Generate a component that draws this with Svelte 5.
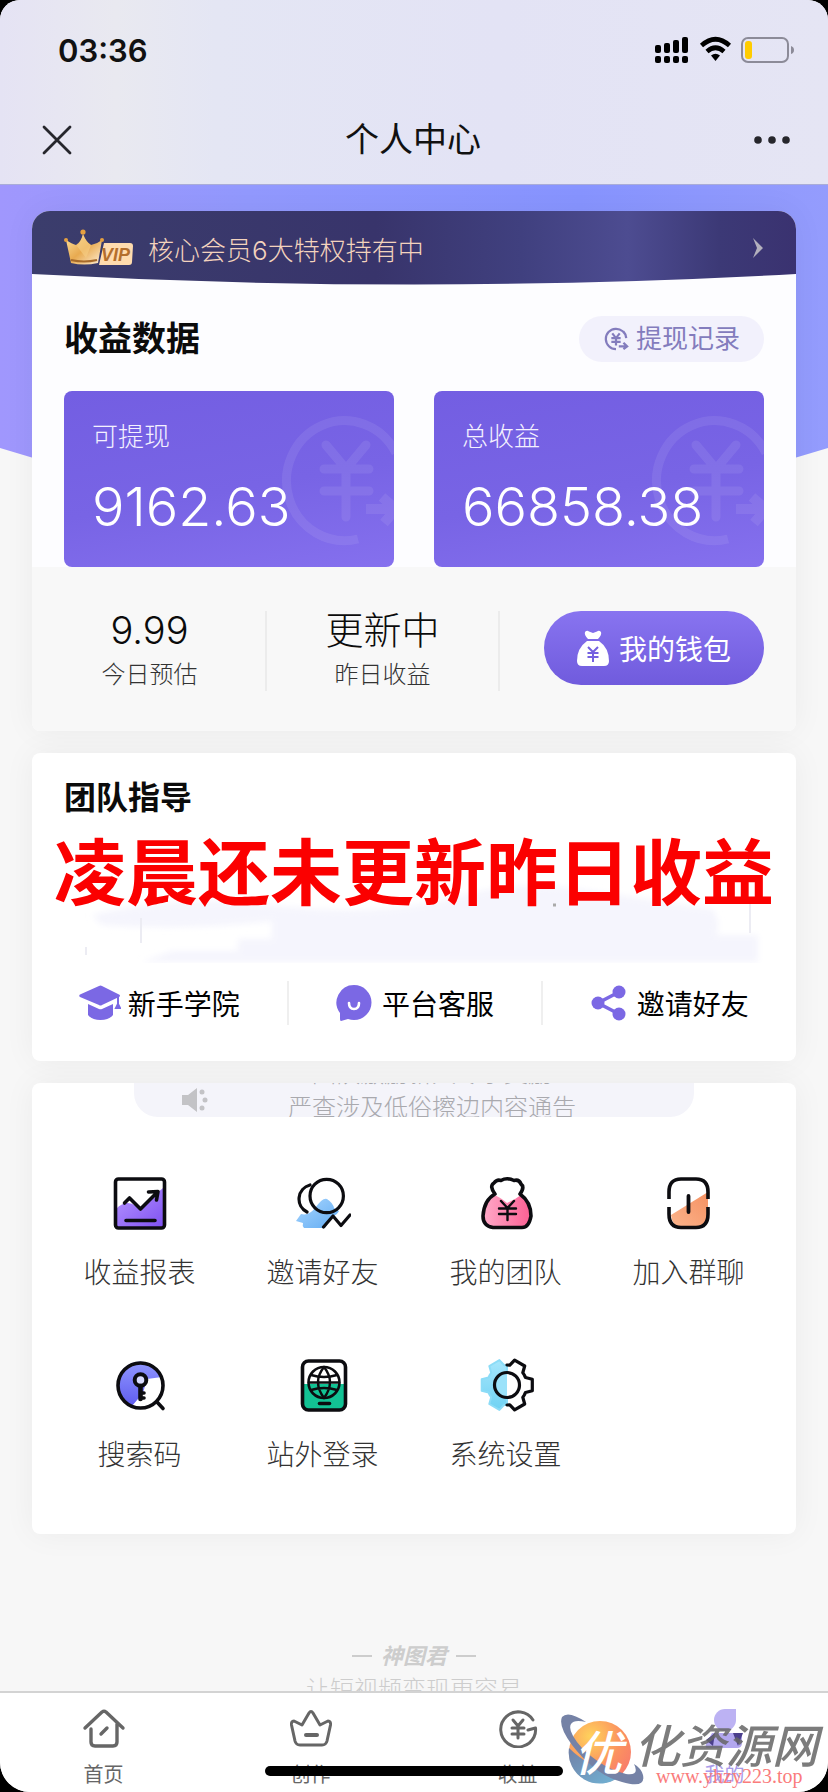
<script>
	const stats = [
		{ label: '可提现', value: '9162.63' },
		{ label: '总收益', value: '66858.38' }
	];

	const links = [
		{ icon: 'school', label: '新手学院' },
		{ icon: 'service', label: '平台客服' },
		{ icon: 'share', label: '邀请好友' }
	];

	const menu = [
		{ icon: 'report', label: '收益报表' },
		{ icon: 'invite', label: '邀请好友' },
		{ icon: 'team', label: '我的团队' },
		{ icon: 'group', label: '加入群聊' },
		{ icon: 'code', label: '搜索码' },
		{ icon: 'login', label: '站外登录' },
		{ icon: 'setting', label: '系统设置' }
	];

	const tabs = [
		{ icon: 'home', label: '首页' },
		{ icon: 'create', label: '创作' },
		{ icon: 'income', label: '收益' },
		{ icon: 'mine', label: '我的', active: true }
	];

	// half of a six-tooth gear, going clockwise from the start angle
	function gear(start) {
		const steps = [[0, 20], [8, 20], [17, 26], [43, 26], [52, 20], [60, 20]];
		let points = [];
		for (let tooth = 0; tooth < 3; tooth++) {
			for (const [deg, r] of steps) {
				const a = ((start + tooth * 60 + deg) * Math.PI) / 180;
				points.push((29 + r * Math.cos(a)).toFixed(1) + ',' + (28 + r * Math.sin(a)).toFixed(1));
			}
		}
		return points.join(' ');
	}
</script>

<div class="app">
	<header>
		<div class="status">
			<span class="time">03:36</span>
			<svg width="140" height="28" viewBox="0 0 140 28" aria-hidden="true">
				<rect x="0" y="9" width="6" height="8" rx="2" /><rect x="9" y="7" width="6" height="10" rx="2" />
				<rect x="18" y="4" width="6" height="13" rx="2" /><rect x="27" y="1" width="6" height="16" rx="2" />
				<rect x="0" y="20" width="6" height="7" rx="2" /><rect x="9" y="20" width="6" height="7" rx="2" />
				<rect x="18" y="20" width="6" height="7" rx="2" /><rect x="27" y="20" width="6" height="7" rx="2" />
				<path d="M46.500 9.500Q60.500 -3 74.500 9.500" fill="none" stroke="#000" stroke-width="4.600" />
				<path d="M52 15.500Q60.500 8 69 15.500" fill="none" stroke="#000" stroke-width="4.600" />
				<path d="M56 19.500Q60.500 16 65 19.500L60.500 25Z" />
				<rect x="87" y="2" width="46" height="24" rx="6" fill="none" stroke="#8c8b98" stroke-width="2" />
				<rect x="90" y="5" width="7" height="18" rx="3" fill="#fc0" />
				<path d="M136 10Q139 11 139 14Q139 17 136 18Z" fill="#8c8b98" />
			</svg>
		</div>
		<div class="nav">
			<button class="icon_button" aria-label="关闭">
				<svg width="30" height="30" viewBox="0 0 30 30"><path d="M2 2L28 28M28 2L2 28" stroke="#26262c" stroke-width="2.800" stroke-linecap="round" /></svg>
			</button>
			<h1>个人中心</h1>
			<button class="icon_button" aria-label="更多">
				<svg width="36" height="10" viewBox="0 0 36 10" fill="#26262c"><circle cx="4" cy="5" r="3.800" /><circle cx="18" cy="5" r="3.800" /><circle cx="32" cy="5" r="3.800" /></svg>
			</button>
		</div>
	</header>

	<main>
		<svg class="hero" viewBox="0 0 828 330" preserveAspectRatio="none" aria-hidden="true">
			<defs>
				<linearGradient id="heroFill" x1="0" y1="0" x2="1" y2="0">
					<stop offset="0" stop-color="#a097fd" /><stop offset="0.300" stop-color="#9299fe" />
					<stop offset="0.700" stop-color="#8794ff" /><stop offset="1" stop-color="#949cfd" />
				</linearGradient>
			</defs>
			<path d="M0 0H828V263Q414 392 0 263Z" fill="url(#heroFill)" />
		</svg>

		<section class="card income">
			<a class="vip" href="#vip">
				<svg class="vip_back" viewBox="0 0 764 74" preserveAspectRatio="none" aria-hidden="true">
					<defs>
						<linearGradient id="vipFill" x1="0" y1="0" x2="1" y2="0">
							<stop offset="0" stop-color="#3b3d6c" /><stop offset="0.450" stop-color="#38346b" />
							<stop offset="0.640" stop-color="#40407f" /><stop offset="0.780" stop-color="#4d4c91" />
							<stop offset="0.900" stop-color="#3c3976" /><stop offset="1" stop-color="#3a3270" />
						</linearGradient>
					</defs>
					<path d="M0 0H764V63Q382 84 0 63Z" fill="url(#vipFill)" />
				</svg>
				<svg class="crown" width="70" height="38" viewBox="0 0 70 38" aria-hidden="true">
					<defs>
						<linearGradient id="gold" x1="0" y1="0" x2="1" y2="1">
							<stop offset="0" stop-color="#ffe3a0" /><stop offset="0.500" stop-color="#e8aa50" /><stop offset="1" stop-color="#fff0d8" />
						</linearGradient>
					</defs>
					<path d="M2 11Q8 15 12 16Q17 13 19 5Q22 13 27 16Q33 15 38 11L34 34Q20 37 7 34Z" fill="url(#gold)" />
					<path d="M19 5Q22 13 27 16L22 29L13 17Q17 13 19 5Z" fill="#f6cf85" opacity="0.600" />
					<circle cx="19" cy="3" r="2.600" fill="#e5a040" /><circle cx="2" cy="11" r="2" fill="#e5a040" /><circle cx="38" cy="11" r="2" fill="#e5a040" />
					<path d="M7 31Q20 34 33 31" fill="none" stroke="#a66a2a" stroke-width="2" />
					<path d="M40 14H66Q69 14 69 17L68 33Q68 36 65 36H35Z" fill="#ffdcae" />
					<text x="37" y="32" font-family="Liberation Sans, sans-serif" font-size="18" font-weight="700" font-style="italic" fill="#b46f2c">VIP</text>
				</svg>
				<span>核心会员6大特权持有中</span>
				<svg class="arrow" width="12" height="22" viewBox="0 0 12 22" aria-hidden="true"><path d="M1 1L11 11L1 21L5 11Z" fill="#b3b0bd" /></svg>
			</a>

			<div class="income_head">
				<h2>收益数据</h2>
				<button class="record">
					<svg width="26" height="28" viewBox="0 0 28 28" fill="none" stroke="#837cbd" stroke-width="2.400" aria-hidden="true">
						<path d="M25 13A11 11 0 1 0 14 25M25 13Q25 9 22 6" />
						<path d="M10 8L14 13L18 8M9 13H19M9 17H19M14 13V21" />
						<path d="M17 22H25M22 18L26 22L22 25" />
					</svg>
					提现记录
				</button>
			</div>

			<div class="totals">
				{#each stats as item}
					<div class="total">
						<svg class="coin" width="120" height="136" viewBox="0 0 120 136" fill="none" stroke="#fff" aria-hidden="true">
							<path d="M122 40A58 60 0 1 0 84 126" stroke-width="9" />
							<path d="M52 32L72 56L92 32M50 56H95M50 78H95M72 56V104" stroke-width="9" stroke-linecap="round" />
							<path d="M92 96H120M108 84L122 96L110 110" stroke-width="10" />
						</svg>
						<div class="total_label">{item.label}</div>
						<div class="total_value">{item.value}</div>
					</div>
				{/each}
			</div>

			<div class="daily">
				<div class="day">
					<div class="day_value">9.99</div>
					<div class="day_label">今日预估</div>
				</div>
				<div class="day">
					<div class="day_value">更新中</div>
					<div class="day_label">昨日收益</div>
				</div>
				<button class="wallet">
					<svg width="32" height="36" viewBox="0 0 32 36" aria-hidden="true">
						<path d="M8 2Q10 0 12 1.500L16 3L20 1.500Q22 0 24 2Q25 5 21 9H11Q7 5 8 2Z" fill="#fff" />
						<path d="M10 11H22Q32 18 32 31Q32 36 27 36H5Q0 36 0 31Q0 18 10 11Z" fill="#fff" />
						<path d="M11 17L16 22L21 17M10.500 23H21.500M10.500 27H21.500M16 22V32" fill="none" stroke="#7460e0" stroke-width="2" />
					</svg>
					我的钱包
				</button>
			</div>
		</section>

		<section class="card guide">
			<h2>团队指导</h2>
			<svg class="smudge" viewBox="0 0 764 120" preserveAspectRatio="none" aria-hidden="true">
				<defs><filter id="soft"><feGaussianBlur stdDeviation="3" /></filter></defs>
				<path d="M60 72Q150 50 240 62Q330 74 410 58Q480 34 560 48L680 66Q690 78 684 92H726V119H110L140 108H206V96H240V78Q160 88 70 82Z" fill="#f5f5fd" filter="url(#soft)" />
				<path d="M109 75V100M718 60V90M54 104V112" stroke="#ececf3" stroke-width="2" />
				<path d="M521 62L524 62" stroke="#aaa" stroke-width="3" />
			</svg>
			<p class="notice_red">凌晨还未更新昨日收益</p>
			<div class="links">
				{#each links as link}
					<a href="#{link.icon}">
						{#if link.icon == 'school'}
							<svg width="42" height="36" viewBox="0 0 42 36" fill="#7b68e4" aria-hidden="true">
								<path d="M20 1Q21.500 0 23 1L40 9.500Q42 10.500 40 12L23 20Q21.500 21 20 20L1 12Q-0.500 10.500 1 9.500Z" />
								<path d="M9 19L20 24Q21.500 24.500 23 24L34 19V30Q30 35 21.500 35Q13 35 9 30Z" />
								<path d="M39 12V19M39 19L37 23H41Z" stroke="#7b68e4" stroke-width="2" />
							</svg>
						{:else if link.icon == 'service'}
							<svg width="36" height="36" viewBox="0 0 36 36" aria-hidden="true">
								<path d="M18 0A17.500 17.500 0 0 1 18 35Q15 35 12 34L5 36Q4 36 4 34V28A17.500 17.500 0 0 1 18 0Z" fill="#7b68e4" />
								<path d="M13 18Q13 24 18 24Q23 24 23 18" fill="none" stroke="#fff" stroke-width="2.600" stroke-linecap="round" />
							</svg>
						{:else}
							<svg width="36" height="36" viewBox="0 0 36 36" fill="#7b68e4" aria-hidden="true">
								<path d="M28 7L7 18L28 29" fill="none" stroke="#7b68e4" stroke-width="3.600" />
								<circle cx="28" cy="7" r="6.500" /><circle cx="7" cy="18" r="6.500" /><circle cx="28" cy="29" r="6.500" />
							</svg>
						{/if}
						{link.label}
					</a>
				{/each}
			</div>
		</section>

		<section class="card tools">
			<div class="bulletin">
				<svg width="28" height="26" viewBox="0 0 28 26" fill="#c3c3c6" aria-hidden="true">
					<path d="M0 8H6L15 1V25L6 18H0Z" /><circle cx="20" cy="5" r="2.500" /><circle cx="23" cy="13" r="2.500" /><circle cx="20" cy="21" r="2.500" />
				</svg>
				<div class="bulletin_text">
					<div>团队激励新人专享奖励</div>
					<div>严查涉及低俗擦边内容通告</div>
				</div>
			</div>

			<div class="menu">
				{#each menu as item}
					<a href="#{item.icon}">
						<svg width="56" height="56" viewBox="0 0 56 56" fill="none" stroke="#0c0c10" stroke-width="3.600" stroke-linecap="round" stroke-linejoin="round" aria-hidden="true">
							{#if item.icon == 'report'}
								<defs><linearGradient id="violet" x1="0" y1="0" x2="1" y2="1"><stop offset="0" stop-color="#b897ff" /><stop offset="1" stop-color="#7f52f2" /></linearGradient></defs>
								<path d="M4 34Q14 24 24 31Q30 35 38 24L51 13V52H4Z" fill="url(#violet)" stroke="none" />
								<rect x="3.500" y="4" width="49" height="49" rx="3" />
								<path d="M12.500 28L17.500 23L28.500 34L45.500 17M36.500 17L46 16.500L44.500 25M14 45.500H43" />
							{:else if item.icon == 'invite'}
								<defs><linearGradient id="sky" x1="0" y1="0" x2="1" y2="1"><stop offset="0" stop-color="#a9d6ff" /><stop offset="1" stop-color="#62acf2" /></linearGradient></defs>
								<path d="M1 46L6 39Q14 41 20 33Q28 22 32 24Q38 28 39 33L44 36Q42 40 38 41L30 53H9Q7 51 8 48Z" fill="url(#sky)" stroke="none" />
								<circle cx="31.700" cy="21" r="16.700" stroke-width="3.200" />
								<path d="M15 10A14.500 14.500 0 0 0 12 37M28.500 52L38 41L46 50.500L55 40" stroke-width="3.200" />
							{:else if item.icon == 'team'}
								<defs><linearGradient id="pink" x1="0" y1="0" x2="1" y2="0"><stop offset="0" stop-color="#ffa9c8" /><stop offset="1" stop-color="#fb5f93" /></linearGradient></defs>
								<path d="M16 20Q22 22 29 28Q38 24 43 20Q54 27 53 42Q51 53 44 53H15Q5 51 5 41Q6 26 16 20Z" fill="url(#pink)" stroke="none" />
								<path d="M17 19Q11 11 16 8Q19 4 23 5.500Q29 2 36 5.500Q41 4 43 9Q47 12 42 19Q53 27 53 41Q51 52.500 44 52.500H15Q5 51 5 41Q6 25 17 19Z" />
								<path d="M23 26L29.500 33L36 26M21 33.500H38M21 39H38M29.500 33V45" stroke-width="2.400" />
							{:else if item.icon == 'group'}
								<defs><linearGradient id="orange" x1="0" y1="1" x2="1" y2="0"><stop offset="0" stop-color="#fbb48c" /><stop offset="1" stop-color="#f59162" /></linearGradient></defs>
								<path d="M10 40L47 17V40Q46 52 36 52H20Q11 51 10 40Z" fill="url(#orange)" stroke="none" />
								<path d="M8 24V17Q8 4 20 4H35Q47 4 47 17V24M8 32V39Q8 52.500 20 52.500H35Q47 52.500 47 39V32" stroke-linecap="butt" />
								<path d="M27.500 21V37" stroke-width="3.800" />
							{:else if item.icon == 'code'}
								<defs><linearGradient id="indigo" x1="0" y1="0" x2="0" y2="1"><stop offset="0" stop-color="#9097ff" /><stop offset="1" stop-color="#5f5cee" /></linearGradient></defs>
								<path d="M50 20A23 23 0 1 0 20 49L31 36L35 22Z" fill="url(#indigo)" stroke="none" />
								<circle cx="28.500" cy="28.500" r="22.500" />
								<circle cx="28.500" cy="23" r="5.800" fill="#d9dcff" stroke-width="4" />
								<path d="M28.500 29V42" stroke-width="4.600" /><path d="M29 36H32M29 41H32M45 45L51 51.500" />
							{:else if item.icon == 'login'}
								<path d="M8 27H50V48Q50 53 46 53H12Q8 53 8 48Z" fill="#12c294" stroke="none" />
								<rect x="7.500" y="4" width="43" height="49" rx="6" />
								<circle cx="29" cy="25.500" r="15.500" stroke-width="2.600" />
								<path d="M29 10Q17 25 29 41M29 10Q41 25 29 41M16 18Q29 22 42 18M16 33Q29 29 42 33M14 25.500H44" stroke-width="2.400" />
								<path d="M24.500 46.500H34.500" />
							{:else}
								<defs><linearGradient id="aqua" x1="0" y1="0" x2="0" y2="1"><stop offset="0" stop-color="#a6e6fc" /><stop offset="1" stop-color="#6fd2f3" /></linearGradient></defs>
								<polygon points={gear(90)} fill="url(#aqua)" stroke="#8cdcf7" stroke-width="2" />
								<circle cx="29" cy="28" r="12.500" fill="#fff" stroke="none" />
								<path d="M29 16A12 12 0 0 0 29 40Z" fill="#9be2fa" stroke="none" />
								<polyline points={gear(-90)} stroke-width="3.200" />
								<circle cx="29" cy="28" r="12.500" stroke-width="3.200" />
							{/if}
						</svg>
						<span>{item.label}</span>
					</a>
				{/each}
			</div>
		</section>

		<div class="brand">
			<div class="brand_name"><i></i><b>神图君</b><i></i></div>
			<div class="brand_slogan">让短视频变现更容易</div>
		</div>
	</main>

	<nav class="tabbar">
		{#each tabs as tab}
			<a href="#{tab.icon}" class:active={tab.active}>
				<svg width="44" height="40" viewBox="0 0 44 40" fill="none" stroke="#666" stroke-width="3.400" stroke-linecap="round" stroke-linejoin="round" aria-hidden="true">
					{#if tab.icon == 'home'}
						<path d="M3 20L20 4Q22 2.500 24 4L41 20M9 21V34Q9 38 13 38H31Q35 38 35 34V16M19 26L25 20" />
					{:else if tab.icon == 'create'}
						<path d="M6 33L2.500 17Q2 13 5 13L13 17L20 5Q22 2 24 5L31 17L39 13Q42 13 41.500 17L38 33Q37 37 33 37H11Q7 37 6 33Z" stroke-width="3" /><path d="M17 27H28" stroke-width="4" />
					{:else if tab.icon == 'income'}
						<path d="M37 12A17.500 17.500 0 1 0 38 29Q40 25 39.500 20L32 22" stroke-width="3" /><path d="M17 12L22 18L27 12M16 20H28M16 26H28M22 18V30" stroke-width="3" />
					{:else}
						<path d="M22 1H33V12A11 11 0 1 1 22 1Z" fill="#bcb2f3" stroke="none" />
						<path d="M9 25H34Q39 25 39 30V35Q39 40 34 40H4Q2 40 3 36Z" fill="#b2a7ef" stroke="none" />
						<path d="M12 25L3 32L10 38ZM30 25H40L35 38Z" fill="#4b3f8c" stroke="none" />
					{/if}
				</svg>
				<span>{tab.label}</span>
			</a>
		{/each}
	</nav>

	<div class="home_indicator"></div>

	<div class="stamp">
		<svg width="84" height="72" viewBox="0 0 84 72" aria-hidden="true">
			<defs>
				<radialGradient id="sun" cx="0.350" cy="0.250" r="0.800"><stop offset="0" stop-color="#ffd35c" /><stop offset="0.600" stop-color="#fb935f" /><stop offset="1" stop-color="#f87b6b" /></radialGradient>
				<linearGradient id="sea" x1="0" y1="0" x2="1" y2="1"><stop offset="0" stop-color="#7180a6" /><stop offset="1" stop-color="#71b4d6" /></linearGradient>
			</defs>
			<circle cx="40" cy="38" r="31" fill="url(#sun)" />
			<path d="M9 34A31 31 0 0 0 60 62Q28 53 9 34Z" fill="url(#sea)" />
			<path d="M26 8Q8 -4 2 3Q-2 12 12 31Q35 61 62 68Q86 75 83 61Q81 54 74 50Q80 62 66 60Q42 54 22 34Q7 17 11 10Q14 5 26 8Z" fill="#7582a6" />
			<text x="14" y="57" font-family="Noto Sans CJK SC, sans-serif" font-size="48" font-weight="500" font-style="italic" fill="#fff">优</text>
		</svg>
		<div class="stamp_name">化资源网</div>
		<div class="stamp_url">www.yhzy223.top</div>
	</div>
</div>

<style>
	:global(body) { margin: 0; background: #000; }
	* { box-sizing: border-box; }
	h1, h2, p { margin: 0; }
	a { color: inherit; text-decoration: none; }
	button { border: 0; padding: 0; font: inherit; cursor: pointer; }
	svg { flex: none; }

	.app {
		position: relative; display: flex; flex-direction: column; height: 100vh; overflow: hidden;
		border-radius: 20px 20px 30px 30px; background: #f7f7f7; color: #111;
		font-family: Inter, "Noto Sans CJK SC", sans-serif;
	}

	header { flex: none; background: linear-gradient(90deg, #e5e3f4 0, #e9e9f0 14%, #e4e6f4 26%, #e3e3f5 60%, #e5e5f4 100%); border-bottom: 1px solid #a9acd8; }
	.status { display: flex; justify-content: space-between; align-items: center; height: 100px; padding: 0 33px 0 58px; }
	.time { font-size: 31px; font-weight: 600; }
	.nav { display: flex; justify-content: space-between; align-items: center; height: 84px; padding: 0 38px 4px 42px; }
	.nav h1 { font-size: 34px; font-weight: 400; line-height: 48px; }
	.icon_button { display: flex; align-items: center; height: 48px; background: none; }

	main { position: relative; flex: 1; min-height: 0; overflow-y: auto; scrollbar-width: none; padding: 26px 32px 0; }
	.hero { position: absolute; left: 0; top: 0; width: 100%; height: 330px; }
	.card { position: relative; border-radius: 8px; background: #fff; box-shadow: 0 0 32px rgba(0, 0, 0, 0.05); }
	.card + .card { margin-top: 22px; }
	.card h2 { font-weight: 700; color: #0b0b0b; }

	.income { border-radius: 18px 18px 8px 8px; overflow: hidden; background: #fdfdff; }
	.vip { position: relative; display: flex; align-items: center; height: 74px; padding: 0 32px; color: #f3d3bd; font-size: 26px; font-weight: 300; }
	.vip_back { position: absolute; left: 0; top: 0; width: 100%; height: 100%; }
	.crown, .vip span, .arrow { position: relative; }
	.vip span { margin-left: 14px; }
	.arrow { margin-left: auto; }

	.income_head { display: flex; justify-content: space-between; align-items: center; height: 46px; margin: 31px 32px 29px; }
	.income_head h2 { font-size: 34px; line-height: 44px; }
	.record { display: flex; align-items: center; gap: 7px; height: 46px; padding: 0 24px; border-radius: 23px; background: #f2f1fc; color: #837cbd; font-size: 26px; line-height: 44px; }

	.totals { display: grid; grid-template-columns: 1fr 1fr; gap: 40px; padding: 0 32px; }
	.total { position: relative; overflow: hidden; padding: 28px; border-radius: 8px; background: linear-gradient(170deg, #735ee2 0, #7864e5 55%, #8570ee 100%); color: #fff; }
	.coin { position: absolute; right: 0; top: 22px; opacity: 0.08; }
	.total_label { line-height: 36px; font-size: 26px; font-weight: 300; color: #f4f1ff; }
	.total_value { margin-top: 20px; line-height: 64px; font-size: 54px; font-weight: 300; }

	.daily { display: flex; height: 164px; padding: 44px 32px 0 2px; background: #f8f8f8; }
	.day { flex: 1; height: 80px; border-right: 2px solid #ececec; text-align: center; }
	.day_value { line-height: 38px; font-size: 38px; font-weight: 300; color: #0b0b0b; }
	.day_label { margin-top: 10px; line-height: 32px; font-size: 24px; font-weight: 300; color: #333; }
	.wallet { display: flex; justify-content: center; align-items: center; gap: 10px; width: 220px; height: 74px; margin-left: 44px; border-radius: 37px; background: linear-gradient(#8874f0, #705bdd); color: #fff; font-size: 28px; }

	.guide { padding: 22px 0 36px; }
	.guide h2 { padding: 0 32px; font-size: 32px; line-height: 46px; }
	.smudge { position: absolute; left: 0; top: 90px; width: 100%; height: 120px; }
	.notice_red { position: relative; display: flex; justify-content: center; white-space: nowrap; color: #fb0000; font-size: 72px; line-height: 104px; font-weight: 700; }
	.links { display: grid; grid-template-columns: repeat(3, 1fr); margin-top: 56px; }
	.links a { display: flex; justify-content: center; align-items: center; gap: 7px; height: 44px; font-size: 28px; color: #000; }
	.links a + a { gap: 10px; border-left: 2px solid #efefef; }

	.tools { padding-bottom: 59px; }
	.bulletin { display: flex; height: 34px; margin: 0 102px; overflow: hidden; border-radius: 0 0 24px 24px; background: #f4f4fa; }
	.bulletin svg { margin: 4px 0 0 48px; }
	.bulletin_text { flex: 1; margin: -26px 40px 0 0; line-height: 34px; font-size: 24px; font-weight: 300; color: #a9a9ae; text-align: center; white-space: nowrap; }
	.menu { display: grid; grid-template-columns: repeat(4, 1fr); row-gap: 64px; margin-top: 58px; padding: 0 16px; }
	.menu a { display: flex; flex-direction: column; align-items: center; gap: 22px; font-size: 28px; line-height: 40px; font-weight: 300; color: #333; }

	.brand { margin-top: 108px; text-align: center; color: #cdcdcd; }
	.brand_name { display: flex; justify-content: center; align-items: center; gap: 9px; height: 28px; font-size: 22px; line-height: 28px; }
	.brand_name b { font-style: italic; }
	.brand_name i { width: 20px; height: 2px; background: #cdcdcd; }
	.brand_slogan { margin-top: 4px; line-height: 32px; font-size: 24px; font-weight: 300; }

	.tabbar { flex: none; display: flex; height: 101px; border-top: 2px solid #d3d3d3; background: #fff; }
	.tabbar a { flex: 1; display: flex; flex-direction: column; align-items: center; padding-top: 15px; gap: 13px; color: #666; font-size: 20px; line-height: 28px; }
	.tabbar .active { color: #a99bea; }

	.home_indicator { position: absolute; left: 50%; bottom: 16px; width: 36%; height: 10px; margin-left: -18%; border-radius: 5px; background: #000; }

	.stamp { position: absolute; right: 0; bottom: 0; width: 268px; height: 78px; }
	.stamp svg { position: absolute; left: 0; top: 0; }
	.stamp_name { position: absolute; left: 74px; top: 4px; color: #666; opacity: 0.85; font-size: 46px; line-height: 56px; font-weight: 500; font-style: italic; white-space: nowrap; }
	.stamp_url { position: absolute; left: 96px; top: 50px; color: #fa7c7c; font: 20px/24px "Liberation Serif", serif; }
</style>
